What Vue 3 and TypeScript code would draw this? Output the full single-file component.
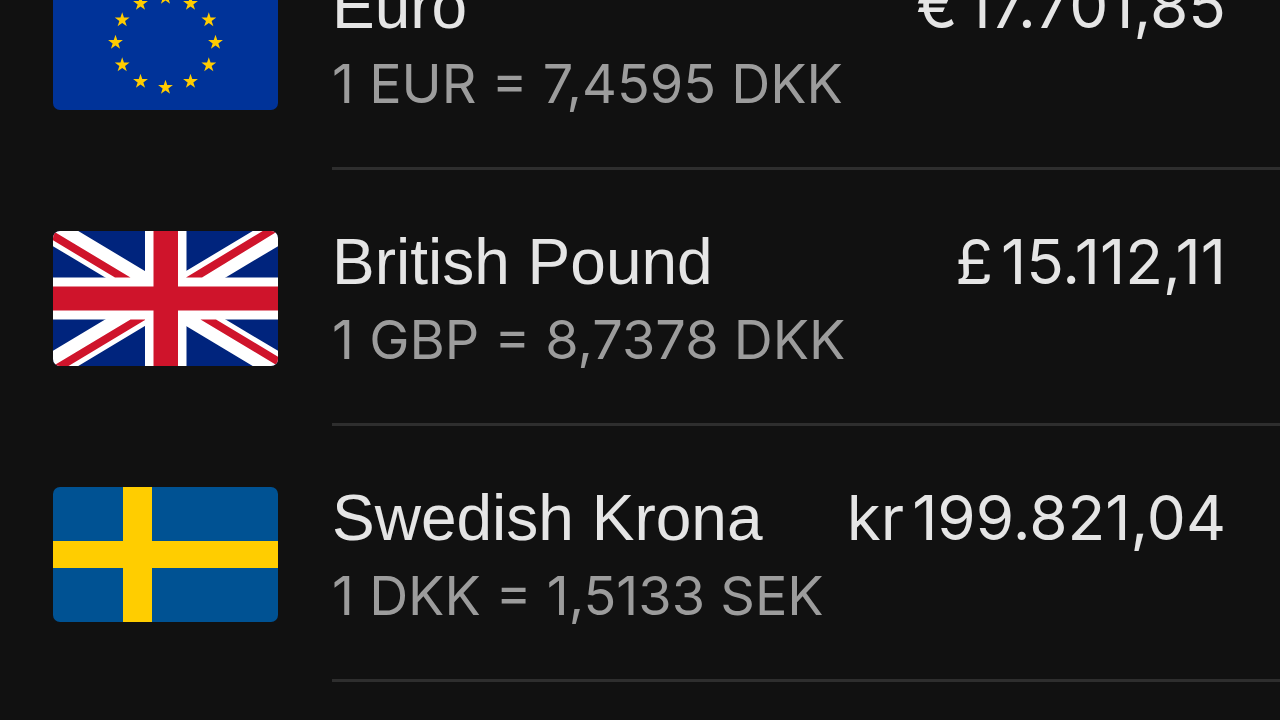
<script setup lang="ts">
interface Account {
  code: string
  name: string
  symbol: string
  amount: string
  rate: string
}

const accounts: Account[] = [
  { code: 'EUR', name: 'Euro', symbol: '€', amount: '17.701,85', rate: '1 EUR = 7,4595 DKK' },
  { code: 'GBP', name: 'British Pound', symbol: '£', amount: '15.112,11', rate: '1 GBP = 8,7378 DKK' },
  { code: 'SEK', name: 'Swedish Krona', symbol: 'kr', amount: '199.821,04', rate: '1 DKK = 1,5133 SEK' },
]

const stars = Array.from({ length: 12 }, (_, i) => {
  const a = (i * Math.PI) / 6
  const cx = 112.5 + 50 * Math.sin(a)
  const cy = 67.5 - 45 * Math.cos(a)
  return Array.from({ length: 10 }, (_, k) => {
    const r = k % 2 ? 3 : 7.8
    const t = (k * Math.PI) / 5
    return `${(cx + r * Math.sin(t)).toFixed(2)},${(cy - r * Math.cos(t)).toFixed(2)}`
  }).join(' ')
})
</script>

<template>
  <main class="screen">
    <ul class="list">
      <li v-for="a in accounts" :key="a.code" class="row">
        <svg class="flag" viewBox="0 0 225 135" aria-hidden="true">
          <template v-if="a.code === 'EUR'">
            <path fill="#003399" d="M0 0h225v135H0z" />
            <polygon v-for="s in stars" :key="s" :points="s" fill="#ffcc00" />
          </template>
          <template v-else-if="a.code === 'GBP'">
            <path fill="#00247d" d="M0 0h225v135H0z" />
            <path stroke="#fff" stroke-width="26" d="M-10 -6L235 141M235 -6L-10 141" />
            <path fill="#fff" d="M92 0h41.500v135H92zM0 46.500h225v42H0z" />
            <path
              fill="#cf142b"
              d="M0 0L77.500 46.500H62L0 9.300zM225 0L149 46.500H133L209.700 0zM77.500 88.500H92V89L15.500 135H0zM147.500 88.500H163L225 125.700V135z"
            />
            <path fill="#cf142b" d="M100.500 0h24.500v135h-24.500zM0 55.500h225v24H0z" />
          </template>
          <template v-else>
            <path fill="#005293" d="M0 0h225v135H0z" />
            <path fill="#ffcd00" d="M70 0h29v135H70zM0 54h225v27H0z" />
          </template>
        </svg>
        <div class="details">
          <div class="headline">
            <span class="name">{{ a.name }}</span>
            <span class="balance"><span>{{ a.symbol }}</span><span>{{ a.amount }}</span></span>
          </div>
          <div class="rate">{{ a.rate }}</div>
        </div>
      </li>
    </ul>
  </main>
</template>

<style>
body {
  background: #111;
}
</style>

<style scoped>
.screen {
  height: 100vh;
  overflow: hidden;
  background: #111;
  color: #e5e5e5;
  font-family: Inter, "Liberation Sans", sans-serif;
}

.list {
  list-style: none;
  margin: -86px 0 0;
  padding: 0;
}

.row {
  display: flex;
  align-items: center;
  gap: 54px;
  height: 256px;
  padding-left: 53px;
}

.flag {
  flex: none;
  width: 225px;
  height: 135px;
  border-radius: 7px;
}

.details {
  flex: 1;
  height: 256px;
  box-sizing: border-box;
  padding: 52px 54px 0 0;
  border-bottom: 3px solid #2e2e2e;
}

.headline {
  display: flex;
  justify-content: space-between;
  line-height: 80px;
  white-space: nowrap;
}

.name {
  font-family: "Liberation Sans", Arial, sans-serif;
  font-size: 64px;
}

.balance {
  display: flex;
  gap: 8px;
  font-size: 62px;
}

.rate {
  color: #9c9c9c;
  font-size: 54px;
  line-height: 76px;
  white-space: nowrap;
}
</style>
